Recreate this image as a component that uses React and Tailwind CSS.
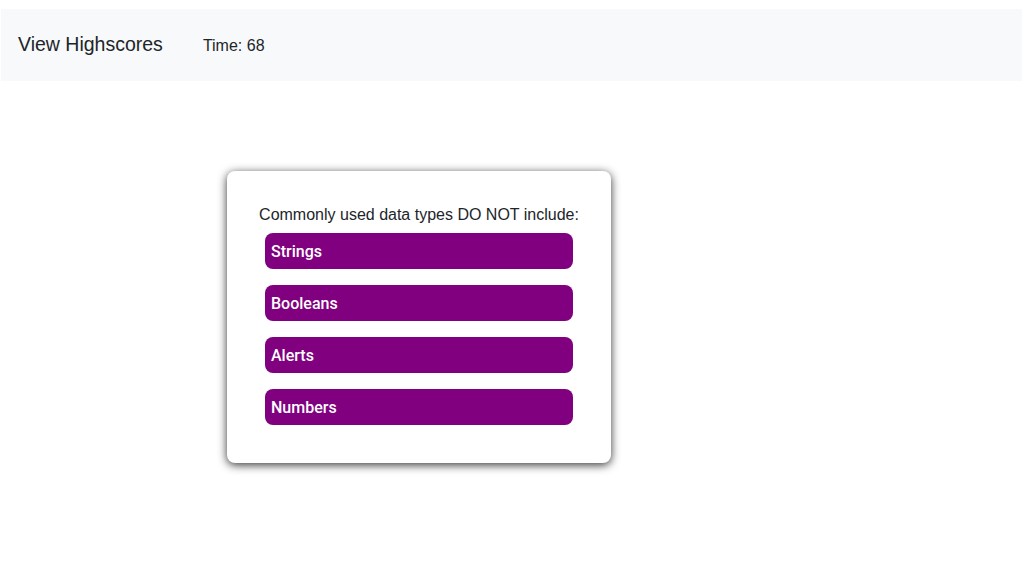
import React from "react";

const choices = ["Strings", "Booleans", "Alerts", "Numbers"];

export default function App() {
  return (
    <div
      className="min-h-[568px] bg-white pt-[9px] text-[#212529]"
      style={{ fontFamily: '"Liberation Sans", Arial, sans-serif' }}
    >
      {/* Navbar */}
      <nav className="ml-px flex h-[72px] items-center bg-[#f8f9fa]">
        <span className="ml-[17px] text-[19.5px]">View Highscores</span>
        <span className="ml-[40px] mt-px text-[16px]">Time: 68</span>
      </nav>

      {/* Question card */}
      <div className="ml-[227px] mt-[90px] w-[384px] rounded-lg bg-white px-[38px] pb-[38px] pt-[32px] shadow-[0_2px_10px_rgba(0,0,0,0.8)]">
        <p className="-mx-5 whitespace-nowrap text-center text-[16px] leading-6">
          Commonly used data types DO NOT include:
        </p>
        <div className="mt-[6px] flex flex-col gap-4">
          {choices.map((choice) => (
            <button
              key={choice}
              className="flex h-9 w-full items-center rounded-lg bg-[#800080] px-[6px] pt-[2px] text-left text-[16px] font-medium text-white"
              style={{ fontFamily: "Roboto, Arial, sans-serif" }}
            >
              {choice}
            </button>
          ))}
        </div>
      </div>
    </div>
  );
}
